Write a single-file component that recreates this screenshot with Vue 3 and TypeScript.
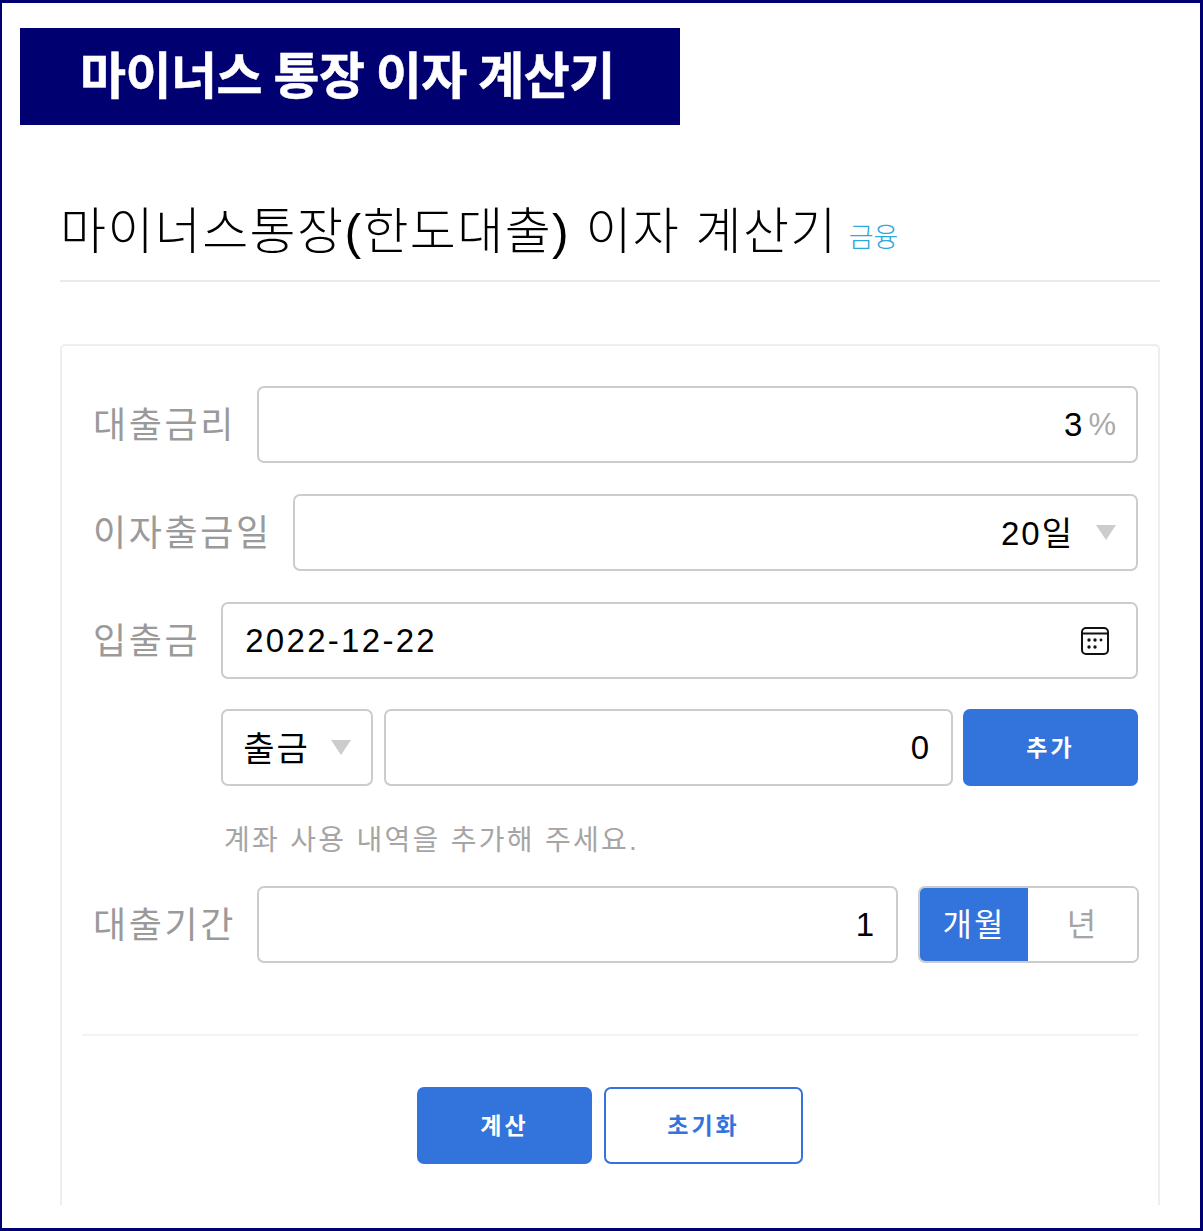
<script setup lang="ts">
import { ref } from 'vue';

const unit = ref<'month' | 'year'>('month');
</script>

<template>
  <div class="page">
    <div class="banner">마이너스 통장 이자 계산기</div>

    <main class="content">
      <h1 class="title">마이너스통장(한도대출) 이자 계산기<a class="category">금융</a></h1>

      <section class="card">
        <div class="row">
          <label class="label">대출금리</label>
          <div class="field right rate">
            <span class="value">3</span><span class="suffix">%</span>
          </div>
        </div>

        <div class="row">
          <label class="label">이자출금일</label>
          <div class="field right select">
            <span class="value">20일</span>
            <i class="caret"></i>
          </div>
        </div>

        <div class="row">
          <label class="label">입출금</label>
          <div class="stack">
            <div class="field date">
              <span class="value">2022-12-22</span>
              <svg class="cal" width="30" height="30" viewBox="0 0 30 30" fill="none">
                <rect x="2" y="2" width="26" height="26" rx="4" stroke="#111" stroke-width="2" />
                <path d="M2 7.5h26" stroke="#111" stroke-width="2" />
                <g fill="#111">
                  <circle cx="9" cy="14" r="1.7" />
                  <circle cx="15" cy="14" r="1.7" />
                  <circle cx="21" cy="14" r="1.4" />
                  <circle cx="9" cy="21" r="1.7" />
                  <circle cx="15" cy="21" r="1.7" />
                </g>
              </svg>
            </div>

            <div class="add-row">
              <div class="field kind">
                <span class="value">출금</span>
                <i class="caret"></i>
              </div>
              <div class="field right amount"><span class="value">0</span></div>
              <button class="btn primary add">추가</button>
            </div>
          </div>
        </div>

        <p class="hint">계좌 사용 내역을 추가해 주세요.</p>

        <div class="row">
          <label class="label">대출기간</label>
          <div class="field right period"><span class="value">1</span></div>
          <div class="toggle">
            <button class="seg" :class="{ on: unit === 'month' }" @click="unit = 'month'">개월</button>
            <button class="seg" :class="{ on: unit === 'year' }" @click="unit = 'year'">년</button>
          </div>
        </div>

        <div class="actions">
          <button class="btn primary calc">계산</button>
          <button class="btn outline reset">초기화</button>
        </div>
      </section>
    </main>
  </div>
</template>

<style scoped>
.page {
  box-sizing: border-box;
  width: 1203px;
  height: 1231px;
  border: 3px solid #000070;
  border-left-width: 2px;
  padding-top: 25px;
  background: #fff;
  overflow: hidden;
  font-family: "Liberation Sans", "Noto Sans CJK KR", sans-serif;
}

.banner {
  box-sizing: border-box;
  width: 660px;
  height: 97px;
  margin-left: 18px;
  padding-left: 60px;
  background: #000070;
  color: #fff;
  font-size: 50px;
  font-weight: 700;
  line-height: 99px;
  letter-spacing: -0.5px;
  word-spacing: -2px;
  white-space: nowrap;
  -webkit-text-stroke: 0.5px #fff;
}

.content {
  margin: 0 40px 0 58px;
}

.title {
  margin: 0;
  height: 157px;
  padding-top: 79px;
  box-sizing: border-box;
  border-bottom: 2px solid #eaeaea;
  font-size: 50px;
  font-weight: 300;
  line-height: 56px;
  letter-spacing: 1.4px;
  color: #000;
  white-space: nowrap;
}

.category {
  margin-left: 11px;
  font-size: 27px;
  letter-spacing: 0;
  vertical-align: 2px;
  color: #2fa8dc;
}

.card {
  box-sizing: border-box;
  height: 861px;
  margin-top: 62px;
  padding: 40px 20px 0 31px;
  border: 2px solid #eeeeee;
  border-bottom: 0;
  border-radius: 5px 5px 0 0;
}

.row {
  display: flex;
  gap: 21px;
  margin-bottom: 31px;
}

.label {
  height: 77px;
  font-size: 36px;
  line-height: 79px;
  letter-spacing: 2.6px;
  color: #9a9a9a;
  white-space: nowrap;
}

.field {
  box-sizing: border-box;
  display: flex;
  align-items: center;
  height: 77px;
  padding: 0 22px;
  border: 2px solid #cccccc;
  border-radius: 7px;
  background: #fff;
  font-size: 33px;
  letter-spacing: 2px;
  color: #000;
  white-space: nowrap;
  flex: 1;
}

.right {
  justify-content: flex-end;
}

.rate {
  padding-right: 20px;
}

.suffix {
  margin-left: 4px;
  font-size: 31px;
  letter-spacing: 0;
  color: #aaaaaa;
}

.period .value,
.amount .value {
  letter-spacing: 0;
}

.select {
  padding-right: 20px;
}

.select .value {
  padding-bottom: 4px;
}

.caret {
  flex: none;
  width: 0;
  height: 0;
  margin-left: 22px;
  border-left: 10px solid transparent;
  border-right: 10px solid transparent;
  border-top: 15px solid #cccccc;
}

.date {
  flex: none;
  justify-content: space-between;
}

.date .value {
  letter-spacing: 2.3px;
}

.cal {
  margin-right: 4px;
}

.stack {
  flex: 1;
  display: flex;
  flex-direction: column;
  gap: 30px;
}

.add-row {
  display: flex;
  gap: 11px;
}

.kind {
  flex: none;
  width: 152px;
  padding-left: 20px;
  font-size: 34px;
}

.kind .value {
  padding-bottom: 3px;
}

.kind .caret {
  margin-left: 21px;
}

.amount {
  flex: 1;
}

.btn {
  box-sizing: border-box;
  height: 77px;
  padding-bottom: 4px;
  border-radius: 7px;
  font-family: inherit;
  font-size: 23px;
  font-weight: 700;
  letter-spacing: 3px;
}

.primary {
  border: 2px solid #3273dc;
  background: #3273dc;
  color: #fff;
}

.outline {
  border: 2px solid #3273dc;
  background: #fff;
  color: #3273dc;
}

.add {
  width: 175px;
  margin-left: -1px;
}

.hint {
  margin: 39px 0 29px 131px;
  height: 32px;
  font-size: 28px;
  line-height: 32px;
  letter-spacing: 2.3px;
  color: #a5a5a5;
}

.toggle {
  display: flex;
  flex: none;
  box-sizing: border-box;
  width: 221px;
  height: 77px;
  margin-left: -1px;
  margin-right: -1px;
  border: 2px solid #cccccc;
  border-radius: 7px;
  overflow: hidden;
}

.seg {
  flex: 1;
  padding: 0 0 5px;
  border: 0;
  background: #fff;
  font-family: inherit;
  font-size: 32px;
  letter-spacing: 2px;
  color: #a5a5a5;
}

.seg.on {
  flex: none;
  width: 108px;
  background: #3273dc;
  color: #fff;
}

.actions {
  display: flex;
  justify-content: center;
  gap: 12px;
  margin: 71px 0 0 -11px;
  padding-top: 51px;
  border-top: 2px solid #f3f3f3;
}

.calc {
  width: 175px;
}

.reset {
  width: 199px;
}
</style>
